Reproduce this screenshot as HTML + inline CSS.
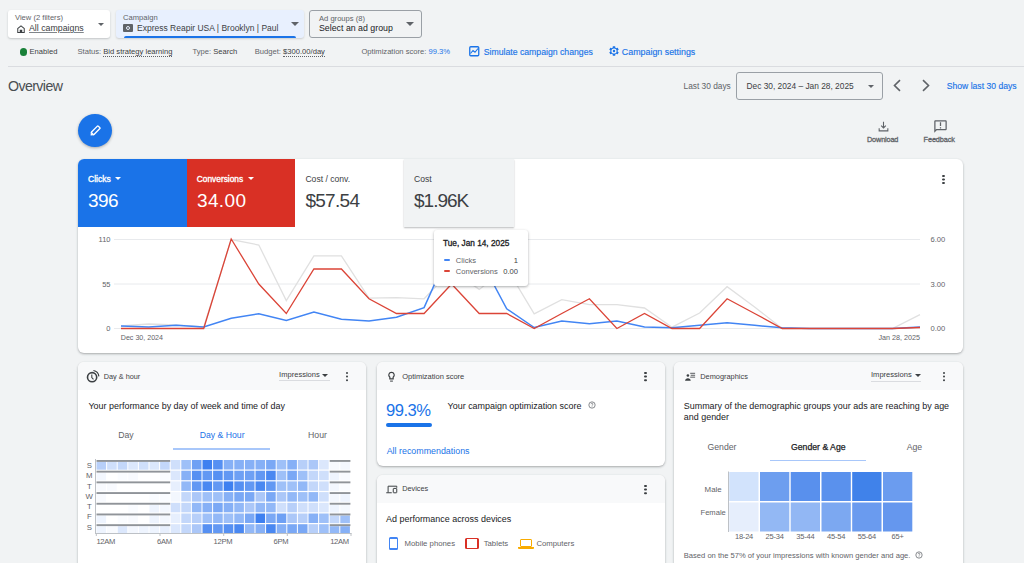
<!DOCTYPE html>
<html><head><meta charset="utf-8">
<style>
*{box-sizing:border-box;margin:0;padding:0}
html,body{width:1024px;height:563px;overflow:hidden;background:#f1f3f4;font-family:"Liberation Sans",sans-serif;color:#3c4043;position:relative}
.a{position:absolute;white-space:nowrap}
.dd{position:absolute;border-radius:3px}
.lbl{position:absolute;font-size:7.6px;color:#5f6368;white-space:nowrap}
.val{position:absolute;font-size:8.8px;color:#202124;white-space:nowrap}
.tri{position:absolute;width:0;height:0;border-left:4px solid transparent;border-right:4px solid transparent;border-top:4px solid #5f6368}
.st{font-size:7.6px;color:#5f6368;top:47px}
.stv{color:#3c4043}
.dot{border-bottom:1px dotted #5f6368}
.link{color:#1a73e8}
.card{position:absolute;background:#fff;border-radius:6px;box-shadow:0 1px 2px rgba(60,64,67,.3),0 1px 3px rgba(60,64,67,.12);overflow:hidden}
.tl{top:15px}
.tv{top:31.4px;font-size:19px}
.ht{top:9.8px;font-size:7.3px;color:#3c4043}
.imp{top:8.2px;font-size:7.55px;color:#3c4043}
.keb{top:9.6px;width:2.4px;height:2.4px;border-radius:50%;background:#3c4043;box-shadow:0 3.6px 0 #3c4043,0 7.2px 0 #3c4043}
.bt{font-size:8.95px;color:#202124}
.tab{top:67.5px;font-size:8.7px;color:#5f6368}
.dl{top:64px;font-size:7.75px;color:#5f6368}
.chead{position:absolute;left:0;right:0;top:0;height:28px;background:#f8f9fa}
</style></head><body>

<!-- top dropdowns -->
<div class="dd" style="left:8px;top:10px;width:102px;height:28px;background:#fff;box-shadow:0 1px 2px rgba(60,64,67,.25)">
  <div class="lbl" style="left:7px;top:3px">View (2 filters)</div>
  <svg class="a" style="left:7.5px;top:13.5px" width="10" height="10" viewBox="0 0 20 20"><path d="M10 2.5L2.5 8.5V18h15V8.5L10 2.5zM15.5 16h-3v-4.5h-5V16h-3V9.5L10 5l5.5 4.5V16z" fill="#3c4043"/></svg>
  <div class="val" style="left:21px;top:13px;text-decoration:underline;text-decoration-color:#80868b;color:#3c4043">All campaigns</div>
  <div class="tri" style="left:90px;top:12.5px;border-width:3.2px 3.2px 0"></div>
</div>

<div class="dd" style="left:116px;top:10px;width:188px;height:28px;background:#e8f0fe;box-shadow:0 1px 2px rgba(60,64,67,.2)">
  <div class="lbl" style="left:7px;top:3px">Campaign</div>
  <div class="a" style="left:7px;top:14px;width:10px;height:8px;background:#5f6368;border-radius:1px"></div>
  <div class="a" style="left:10px;top:15.5px;width:4px;height:4px;border:1px solid #e8f0fe;border-radius:50%"></div>
  <div class="val" style="left:21px;top:12.5px;color:#3c4043;font-size:8.5px">Express Reapir USA | Brooklyn | Paul</div>
  <div class="tri" style="left:175px;top:12px"></div>
  <div class="a" style="left:8px;top:25.5px;width:172px;height:2.5px;background:#1a73e8;border-radius:2px 2px 0 0"></div>
</div>

<div class="dd" style="left:309px;top:10px;width:113px;height:28px;border:1px solid #9aa0a6">
  <div class="lbl" style="left:9px;top:3px">Ad groups (8)</div>
  <div class="val" style="left:9px;top:12px;color:#202124">Select an ad group</div>
  <div class="tri" style="left:96px;top:11px"></div>
</div>

<!-- status row -->
<div class="a" style="left:19.6px;top:48.4px;width:7.4px;height:7.4px;border-radius:50%;background:#188038"></div>
<div class="a st" style="left:29.5px;color:#3c4043">Enabled</div>
<div class="a st" style="left:77.5px">Status: <span class="stv dot">Bid strategy learning</span></div>
<div class="a st" style="left:192.5px">Type: <span class="stv">Search</span></div>
<div class="a st" style="left:254.8px">Budget: <span class="stv dot">$300.00/day</span></div>
<div class="a st" style="left:361.4px">Optimization score: <span class="link">99.3%</span></div>
<svg class="a" style="left:469px;top:46px" width="10.5" height="10.5" viewBox="0 0 21 21"><rect x="1.5" y="1.5" width="18" height="18" rx="2" fill="none" stroke="#1a73e8" stroke-width="2.6"/><polyline points="3,15 8,9 12,12.5 18,5" fill="none" stroke="#1a73e8" stroke-width="2.2"/></svg>
<div class="a link" style="left:483.7px;top:46.8px;font-size:8.7px;-webkit-text-stroke:.15px #1a73e8">Simulate campaign changes</div>
<svg class="a" style="left:607.6px;top:45.4px" width="12" height="12" viewBox="0 0 24 24"><path d="M19.14 12.94c.04-.3.06-.61.06-.94 0-.32-.02-.64-.07-.94l2.03-1.58a.49.49 0 00.12-.61l-1.92-3.32a.488.488 0 00-.59-.22l-2.39.96c-.5-.38-1.03-.7-1.62-.94l-.36-2.54a.484.484 0 00-.48-.41h-3.84c-.24 0-.43.17-.47.41l-.36 2.54c-.59.24-1.13.57-1.62.94l-2.39-.96c-.22-.08-.47 0-.59.22L2.74 8.87c-.12.21-.08.47.12.61l2.03 1.58c-.05.3-.09.63-.09.94s.02.64.07.94l-2.03 1.58a.49.49 0 00-.12.61l1.92 3.32c.12.22.37.29.59.22l2.39-.96c.5.38 1.03.7 1.62.94l.36 2.54c.05.24.24.41.48.41h3.84c.24 0 .44-.17.47-.41l.36-2.54c.59-.24 1.13-.56 1.62-.94l2.39.96c.22.08.47 0 .59-.22l1.92-3.32c.12-.22.07-.47-.12-.61l-2.01-1.58z" fill="#1a73e8"/><circle cx="12" cy="12" r="5.2" fill="#f1f3f4"/><circle cx="12" cy="12" r="2.4" fill="#1a73e8"/></svg>
<div class="a link" style="left:621.8px;top:46.8px;font-size:8.9px;-webkit-text-stroke:.15px #1a73e8">Campaign settings</div>

<div class="a" style="left:8px;top:66px;width:1016px;height:1px;background:#dadce0"></div>

<!-- overview row -->
<div class="a" style="left:8px;top:77.8px;font-size:14.2px;letter-spacing:-.6px;color:#4a4e52">Overview</div>
<div class="a" style="left:683.5px;top:81px;font-size:8.34px;color:#5f6368">Last 30 days</div>
<div class="dd" style="left:735.5px;top:71.5px;width:147px;height:28px;border:1px solid #9aa0a6;border-radius:3px">
  <div class="a" style="left:10px;top:8px;font-size:8.36px;color:#3c4043">Dec 30, 2024 – Jan 28, 2025</div>
  <div class="tri" style="left:131px;top:12px;border-width:3.5px 3.5px 0"></div>
</div>
<svg class="a" style="left:892px;top:79px" width="10" height="13" viewBox="0 0 10 13"><polyline points="8,1.2 2.5,6.5 8,11.8" fill="none" stroke="#5f6368" stroke-width="1.6"/></svg>
<svg class="a" style="left:921px;top:79px" width="10" height="13" viewBox="0 0 10 13"><polyline points="2,1.2 7.5,6.5 2,11.8" fill="none" stroke="#5f6368" stroke-width="1.6"/></svg>
<div class="a link" style="left:946.8px;top:81px;font-size:8.6px;-webkit-text-stroke:.15px #1a73e8">Show last 30 days</div>

<!-- FAB -->
<div class="a" style="left:78px;top:114px;width:33.5px;height:33px;border-radius:50%;background:#1a73e8;box-shadow:0 1px 3px rgba(0,0,0,.3)"></div>
<svg class="a" style="left:88px;top:123.5px" width="14" height="14" viewBox="0 0 28 28"><g transform="rotate(45 14 14)"><rect x="10.5" y="2.5" width="7" height="19" rx="1.2" fill="none" stroke="#fff" stroke-width="2.8"/><path d="M10 22 L14 26.5 L18 22z" fill="#fff"/></g></svg>

<!-- download / feedback -->
<svg class="a" style="left:877px;top:119.5px" width="13" height="13" viewBox="0 0 24 24"><path d="M19 15v4H5v-4H3v6h18v-6zM17 11l-1.41-1.41L13 12.17V3h-2v9.17L8.41 9.59 7 11l5 5z" fill="#5f6368"/></svg>
<div class="a" style="left:867px;top:134.5px;font-size:7.3px;color:#5f6368;-webkit-text-stroke:.3px #5f6368;letter-spacing:-.15px">Download</div>
<svg class="a" style="left:932.5px;top:118.5px" width="15" height="15" viewBox="0 0 24 24"><path d="M20 2H4c-1.1 0-2 .9-2 2v18l4-4h14c1.1 0 2-.9 2-2V4c0-1.1-.9-2-2-2zm0 14H5.17L4 17.17V4h16v12zM11 5h2v6h-2zm0 8h2v2h-2z" fill="#5f6368"/></svg>
<div class="a" style="left:923.6px;top:134.5px;font-size:7.3px;color:#5f6368;-webkit-text-stroke:.3px #5f6368;letter-spacing:-.1px">Feedback</div>

<!-- MAIN CARD -->
<div class="card" id="main" style="left:78px;top:159px;width:885px;height:194px">
  <div class="a" style="left:0;top:0;width:109.3px;height:68px;background:#1a73e8"></div>
  <div class="a" style="left:109.3px;top:0;width:108.2px;height:68px;background:#d93025"></div>
  <div class="a" style="left:326.4px;top:0;width:109.6px;height:67.8px;background:#f1f3f4;box-shadow:0 1px 1.5px rgba(60,64,67,.35)"></div>
  <div class="a tl" style="left:10px;color:#fff;font-size:8.5px;-webkit-text-stroke:.35px #fff">Clicks</div>
  <div class="tri" style="left:36.9px;top:18px;border-width:3px 3px 0;border-top-color:#fff"></div>
  <div class="a tv" style="left:10px;color:#fff;letter-spacing:-.6px">396</div>
  <div class="a tl" style="left:118.8px;color:#fff;font-size:8.36px;-webkit-text-stroke:.35px #fff">Conversions</div>
  <div class="tri" style="left:170px;top:18px;border-width:3px 3px 0;border-top-color:#fff"></div>
  <div class="a tv" style="left:119px;color:#fff;letter-spacing:.35px">34.00</div>
  <div class="a tl" style="left:227.4px;color:#3c4043;font-size:8.6px">Cost / conv.</div>
  <div class="a tv" style="left:227.4px;color:#3c4043;letter-spacing:-.7px">$57.54</div>
  <div class="a tl" style="left:336px;color:#3c4043;font-size:8.6px">Cost</div>
  <div class="a tv" style="left:336px;color:#3c4043;letter-spacing:-1px">$1.96K</div>
  <div class="a" style="left:864.4px;top:15.9px;width:2.8px;height:2.4px;border-radius:50%;background:#3c4043;box-shadow:0 3.5px 0 #3c4043,0 7px 0 #3c4043"></div>
</div>
<svg class="a" style="left:0;top:0" width="1024" height="563">
  <g stroke="#e8eaed" stroke-width="1">
    <line x1="114" y1="239.5" x2="920" y2="239.5"/>
    <line x1="114" y1="284" x2="920" y2="284"/>
    <line x1="114" y1="328.5" x2="920" y2="328.5"/>
  </g>
  <g fill="none" stroke-linejoin="miter" stroke-linecap="butt">
  <polyline stroke="#e0e0e0" stroke-width="1.3" points="121.0,326.0 148.6,324.0 176.1,325.0 203.7,327.0 231.2,239.5 258.8,245.0 286.3,300.6 313.9,255.8 341.4,255.8 369.0,298.2 396.5,297.7 424.1,298.8 451.6,270.0 479.2,289.4 506.7,268.0 534.2,313.9 561.8,299.7 589.4,304.7 616.9,304.7 644.5,308.0 672.0,327.2 699.6,313.0 727.1,286.7 754.6,307.0 782.2,328.5 809.8,328.5 837.3,328.5 864.9,328.5 892.4,328.5 920.0,314.6"/>
  <polyline stroke="#4285f4" stroke-width="1.5" points="121.0,326.1 148.6,327.0 176.1,325.2 203.7,327.0 231.2,318.2 258.8,313.8 286.3,320.5 313.9,312.0 341.4,319.3 369.0,321.1 396.5,317.3 424.1,307.6 451.6,246.0 479.2,257.0 506.7,308.8 534.2,327.5 561.8,321.1 589.4,323.7 616.9,321.1 644.5,327.0 672.0,327.8 699.6,325.3 727.1,322.8 754.6,325.3 782.2,327.8 809.8,328.5 837.3,328.5 864.9,328.5 892.4,328.5 920.0,327.0"/>
  <polyline stroke="#db4437" stroke-width="1.3" points="121.0,328.5 148.6,328.5 176.1,328.5 203.7,328.5 231.2,239.0 258.8,284.0 286.3,313.5 313.9,269.0 341.4,269.0 369.0,298.8 396.5,313.5 424.1,313.5 451.6,284.0 479.2,313.5 506.7,313.5 534.2,328.5 561.8,313.5 589.4,298.8 616.9,328.5 644.5,313.5 672.0,328.5 699.6,328.5 727.1,298.8 754.6,313.5 782.2,328.5 809.8,328.5 837.3,328.5 864.9,328.5 892.4,328.5 920.0,327.5"/>
  </g>
  <g font-family="Liberation Sans" font-size="7.5" fill="#5f6368" text-anchor="end">
    <text x="110.5" y="242">110</text>
    <text x="110.5" y="286.5">55</text>
    <text x="110.5" y="331">0</text>
  </g>
  <g font-family="Liberation Sans" font-size="7.6" fill="#5f6368">
    <text x="930.5" y="242">6.00</text>
    <text x="930.5" y="286.5">3.00</text>
    <text x="930.5" y="331">0.00</text>
    <text x="120.8" y="340.3" font-size="7.1">Dec 30, 2024</text>
    <text x="920" y="340.3" font-size="7.2" text-anchor="end">Jan 28, 2025</text>
  </g>
</svg>
<div class="a" style="left:434px;top:230px;width:94px;height:56px;background:#fff;border-radius:3px;box-shadow:0 1px 3px rgba(60,64,67,.3),0 1px 2px rgba(60,64,67,.15)">
  <div class="a" style="left:9px;top:9px;font-size:8.27px;color:#202124;-webkit-text-stroke:.3px #202124">Tue, Jan 14, 2025</div>
  <div class="a" style="left:9.5px;top:28.8px;width:6.5px;height:2px;background:#4285f4;border-radius:1px"></div>
  <div class="a" style="left:21.8px;top:25.5px;font-size:7.6px;color:#5f6368">Clicks</div>
  <div class="a" style="right:10px;top:25.5px;font-size:7.6px;color:#3c4043">1</div>
  <div class="a" style="left:9.5px;top:39.5px;width:6.5px;height:2px;background:#db4437;border-radius:1px"></div>
  <div class="a" style="left:21.8px;top:36.7px;font-size:7.55px;color:#5f6368">Conversions</div>
  <div class="a" style="right:10px;top:36.7px;font-size:7.6px;color:#3c4043">0.00</div>
</div>

<!-- bottom cards -->
<div class="card" style="left:77.8px;top:362px;width:288.3px;height:220px">
  <div class="chead"></div>
  <svg class="a" style="left:5px;top:5px" width="20" height="20" viewBox="0 0 20 20"><circle cx="9.1" cy="10.2" r="4.6" fill="none" stroke="#3c4043" stroke-width="1.6"/><path d="M8.8 7.6v2.9l1.7 1.9" fill="none" stroke="#3c4043" stroke-width="1.1"/><path d="M10.4 3.5A6.8 6.8 0 0 1 15.9 9.4" fill="none" stroke="#3c4043" stroke-width="1.2"/></svg>
  <div class="a ht" style="left:26px">Day &amp; hour</div>
  <div class="a imp" style="left:201.3px">Impressions</div>
  <div class="tri" style="left:244.5px;top:12px;border-width:3px 3px 0;border-top-color:#3c4043"></div>
  <div class="a" style="left:201.3px;top:18.3px;width:51px;height:1px;background:#dadce0"></div>
  <div class="a keb" style="left:267.8px"></div>
  <div class="a bt" style="left:10.7px;top:38.5px">Your performance by day of week and time of day</div>
  <div class="a tab" style="left:40.4px">Day</div>
  <div class="a tab" style="left:121.9px;color:#1a73e8">Day &amp; Hour</div>
  <div class="a tab" style="left:230.3px">Hour</div>
  <div class="a" style="left:95.5px;top:86.2px;width:96.7px;height:1.5px;background:#a8c7fa"></div>
</div>

<div class="card" style="left:376.5px;top:362px;width:288px;height:104px">
  <div class="chead"></div>
  <svg class="a" style="left:10px;top:8.5px" width="10" height="12" viewBox="0 0 20 24"><path d="M9 2.6a5.4 5.4 0 0 0-3.3 9.7V15.6h6.6V12.3A5.4 5.4 0 0 0 9 2.6z" fill="none" stroke="#3c4043" stroke-width="2.4"/><path d="M6.2 20.2h5.6" stroke="#3c4043" stroke-width="2"/></svg>
  <div class="a ht" style="left:25.7px;font-size:7.5px">Optimization score</div>
  <div class="a keb" style="left:267.8px"></div>
  <div class="a" style="left:9.6px;top:39px;font-size:16.6px;color:#1a73e8;letter-spacing:-.55px">99.3%</div>
  <div class="a" style="left:9.5px;top:61px;width:46px;height:3.8px;background:#1a73e8;border-radius:2px"></div>
  <div class="a bt" style="left:71.1px;top:38.5px">Your campaign optimization score</div>
  <svg class="a" style="left:211.3px;top:38.5px" width="8" height="8" viewBox="0 0 24 24"><circle cx="12" cy="12" r="9.5" fill="none" stroke="#5f6368" stroke-width="2.2"/><path d="M9.2 9.5a2.8 2.8 0 1 1 4 2.5c-.9.5-1.2 1-1.2 2" fill="none" stroke="#5f6368" stroke-width="2"/><circle cx="12" cy="17.3" r="1.2" fill="#5f6368"/></svg>
  <div class="a" style="left:10.2px;top:83.5px;font-size:8.88px;color:#1a73e8">All recommendations</div>
</div>

<div class="card" style="left:376.5px;top:475.3px;width:288px;height:120px">
  <div class="chead"></div>
  <svg class="a" style="left:9.5px;top:9.3px" width="12" height="9" viewBox="0 0 24 18"><path d="M4.2 15V2.4H21.5V5.5" fill="none" stroke="#3c4043" stroke-width="2"/><path d="M0.5 15.6h11" stroke="#3c4043" stroke-width="2.2"/><rect x="14.5" y="6.8" width="7" height="8.8" rx="1" fill="none" stroke="#3c4043" stroke-width="2"/></svg>
  <div class="a ht" style="left:25.7px;top:9.1px">Devices</div>
  <div class="a keb" style="left:267.8px"></div>
  <div class="a bt" style="left:9.6px;top:38.8px">Ad performance across devices</div>
  <div class="a" style="left:12px;top:61.5px;width:9.6px;height:13.5px;border:solid #4285f4;border-width:2.2px 1.8px;border-radius:1.5px"></div>
  <div class="a dl" style="left:28.1px">Mobile phones</div>
  <div class="a" style="left:88px;top:63px;width:14px;height:10.3px;border:solid #d93025;border-width:1.8px 2px;border-radius:1.5px"></div>
  <div class="a dl" style="left:107.2px">Tablets</div>
  <div class="a" style="left:143.3px;top:63.5px;width:12px;height:8.5px;border:1.8px solid #f9ab00;border-radius:1px"></div>
  <div class="a" style="left:141.5px;top:71.5px;width:15.6px;height:1.8px;background:#f9ab00;border-radius:0 0 1px 1px"></div>
  <div class="a dl" style="left:159.9px">Computers</div>
</div>

<div class="card" style="left:674px;top:362px;width:289px;height:220px">
  <div class="chead"></div>
  <svg class="a" style="left:9.5px;top:10px" width="12" height="10" viewBox="0 0 24 20"><circle cx="7.8" cy="7" r="2.6" fill="#3c4043"/><path d="M2.2 17.5c0-3 2.5-4.8 5.6-4.8s5.6 1.8 5.6 4.8z" fill="#3c4043"/><path d="M12.4 2.6h9.8M13.5 6.5h8.7M12.4 10.3h9.8" stroke="#3c4043" stroke-width="1.7"/></svg>
  <div class="a ht" style="left:26.2px;font-size:7.4px">Demographics</div>
  <div class="a imp" style="left:197px">Impressions</div>
  <div class="tri" style="left:240.5px;top:12px;border-width:3px 3px 0;border-top-color:#3c4043"></div>
  <div class="a" style="left:197px;top:18.5px;width:50px;height:1px;background:#dadce0"></div>
  <div class="a keb" style="left:268.6px"></div>
  <div class="a bt" style="left:9.8px;top:38.5px;line-height:11.1px">Summary of the demographic groups your ads are reaching by age<br>and gender</div>
  <div class="a tab" style="left:33.5px;top:80px">Gender</div>
  <div class="a tab" style="left:117px;top:80px;color:#202124;-webkit-text-stroke:.25px #202124">Gender &amp; Age</div>
  <div class="a tab" style="left:232.7px;top:80px">Age</div>
  <div class="a" style="left:96.2px;top:97.8px;width:95.5px;height:1.5px;background:#a8c7fa"></div>
  <div class="a" style="left:30.6px;top:123.3px;font-size:7.9px;color:#5f6368">Male</div>
  <div class="a" style="left:26.5px;top:146.2px;font-size:7.6px;color:#5f6368">Female</div>
  <div class="a" style="left:9.8px;top:188.5px;font-size:7.59px;color:#5f6368">Based on the 57% of your impressions with known gender and age.</div>
  <svg class="a" style="left:240.6px;top:188.8px" width="8" height="8" viewBox="0 0 24 24"><circle cx="12" cy="12" r="9.5" fill="none" stroke="#5f6368" stroke-width="2.2"/><path d="M9.2 9.5a2.8 2.8 0 1 1 4 2.5c-.9.5-1.2 1-1.2 2" fill="none" stroke="#5f6368" stroke-width="2"/><circle cx="12" cy="17.3" r="1.2" fill="#5f6368"/></svg>
</div>

<svg class="a" style="left:0;top:0" width="1024" height="563">
<rect x="96.5" y="462.0" width="9.6" height="7.7" fill="#b7cff9"/>
<rect x="107.1" y="462.0" width="9.6" height="7.7" fill="#cfdffb"/>
<rect x="117.7" y="462.0" width="9.6" height="7.7" fill="#c3d7fa"/>
<rect x="128.3" y="462.0" width="9.6" height="7.7" fill="#dbe7fc"/>
<rect x="138.9" y="462.0" width="9.6" height="7.7" fill="#cfdffb"/>
<rect x="149.5" y="462.0" width="9.6" height="7.7" fill="#dbe7fc"/>
<rect x="160.1" y="462.0" width="9.6" height="7.7" fill="#c3d7fa"/>
<rect x="170.7" y="460.0" width="9.6" height="9.5" fill="#cfdffb"/>
<rect x="181.3" y="460.0" width="9.6" height="9.5" fill="#9ec0f8"/>
<rect x="191.9" y="460.0" width="9.6" height="9.5" fill="#6ea0f4"/>
<rect x="202.5" y="460.0" width="9.6" height="9.5" fill="#3e80f0"/>
<rect x="213.1" y="460.0" width="9.6" height="9.5" fill="#5690f2"/>
<rect x="223.7" y="460.0" width="9.6" height="9.5" fill="#86b0f6"/>
<rect x="234.3" y="460.0" width="9.6" height="9.5" fill="#86b0f6"/>
<rect x="244.9" y="460.0" width="9.6" height="9.5" fill="#86b0f6"/>
<rect x="255.5" y="460.0" width="9.6" height="9.5" fill="#86b0f6"/>
<rect x="266.1" y="460.0" width="9.6" height="9.5" fill="#7aa8f5"/>
<rect x="276.7" y="460.0" width="9.6" height="9.5" fill="#9ec0f8"/>
<rect x="287.3" y="460.0" width="9.6" height="9.5" fill="#86b0f6"/>
<rect x="297.9" y="460.0" width="9.6" height="9.5" fill="#b7cff9"/>
<rect x="308.5" y="460.0" width="9.6" height="9.5" fill="#abc7f8"/>
<rect x="319.1" y="460.0" width="9.6" height="9.5" fill="#dbe7fc"/>
<rect x="329.7" y="462.0" width="9.6" height="7.7" fill="#f8fafe"/>
<rect x="340.3" y="462.0" width="9.6" height="7.7" fill="#f3f7fe"/>
<rect x="96.5" y="460.0" width="73.7" height="1.9" fill="#909499"/>
<rect x="329.7" y="460.0" width="20.7" height="1.9" fill="#909499"/>
<rect x="96.5" y="472.7" width="9.6" height="7.7" fill="#f3f7fe"/>
<rect x="107.1" y="472.7" width="9.6" height="7.7" fill="#ffffff"/>
<rect x="117.7" y="472.7" width="9.6" height="7.7" fill="#fafcff"/>
<rect x="128.3" y="472.7" width="9.6" height="7.7" fill="#f8fafe"/>
<rect x="138.9" y="472.7" width="9.6" height="7.7" fill="#ffffff"/>
<rect x="149.5" y="472.7" width="9.6" height="7.7" fill="#ffffff"/>
<rect x="160.1" y="472.7" width="9.6" height="7.7" fill="#fafcff"/>
<rect x="170.7" y="470.7" width="9.6" height="9.5" fill="#dbe7fc"/>
<rect x="181.3" y="470.7" width="9.6" height="9.5" fill="#86b0f6"/>
<rect x="191.9" y="470.7" width="9.6" height="9.5" fill="#5690f2"/>
<rect x="202.5" y="470.7" width="9.6" height="9.5" fill="#6298f3"/>
<rect x="213.1" y="470.7" width="9.6" height="9.5" fill="#5690f2"/>
<rect x="223.7" y="470.7" width="9.6" height="9.5" fill="#6298f3"/>
<rect x="234.3" y="470.7" width="9.6" height="9.5" fill="#6ea0f4"/>
<rect x="244.9" y="470.7" width="9.6" height="9.5" fill="#6ea0f4"/>
<rect x="255.5" y="470.7" width="9.6" height="9.5" fill="#6298f3"/>
<rect x="266.1" y="470.7" width="9.6" height="9.5" fill="#4a88f1"/>
<rect x="276.7" y="470.7" width="9.6" height="9.5" fill="#9ec0f8"/>
<rect x="287.3" y="470.7" width="9.6" height="9.5" fill="#7aa8f5"/>
<rect x="297.9" y="470.7" width="9.6" height="9.5" fill="#9ec0f8"/>
<rect x="308.5" y="470.7" width="9.6" height="9.5" fill="#c3d7fa"/>
<rect x="319.1" y="470.7" width="9.6" height="9.5" fill="#cfdffb"/>
<rect x="329.7" y="472.7" width="9.6" height="7.7" fill="#eef4fe"/>
<rect x="340.3" y="472.7" width="9.6" height="7.7" fill="#f8fafe"/>
<rect x="96.5" y="470.7" width="73.7" height="1.9" fill="#909499"/>
<rect x="329.7" y="470.7" width="20.7" height="1.9" fill="#909499"/>
<rect x="96.5" y="483.4" width="9.6" height="7.7" fill="#f8fafe"/>
<rect x="107.1" y="483.4" width="9.6" height="7.7" fill="#f8fafe"/>
<rect x="117.7" y="483.4" width="9.6" height="7.7" fill="#ffffff"/>
<rect x="128.3" y="483.4" width="9.6" height="7.7" fill="#ffffff"/>
<rect x="138.9" y="483.4" width="9.6" height="7.7" fill="#ffffff"/>
<rect x="149.5" y="483.4" width="9.6" height="7.7" fill="#ffffff"/>
<rect x="160.1" y="483.4" width="9.6" height="7.7" fill="#ffffff"/>
<rect x="170.7" y="481.4" width="9.6" height="9.5" fill="#e7effd"/>
<rect x="181.3" y="481.4" width="9.6" height="9.5" fill="#92b8f7"/>
<rect x="191.9" y="481.4" width="9.6" height="9.5" fill="#6298f3"/>
<rect x="202.5" y="481.4" width="9.6" height="9.5" fill="#4a88f1"/>
<rect x="213.1" y="481.4" width="9.6" height="9.5" fill="#6298f3"/>
<rect x="223.7" y="481.4" width="9.6" height="9.5" fill="#3e80f0"/>
<rect x="234.3" y="481.4" width="9.6" height="9.5" fill="#5690f2"/>
<rect x="244.9" y="481.4" width="9.6" height="9.5" fill="#6298f3"/>
<rect x="255.5" y="481.4" width="9.6" height="9.5" fill="#4a88f1"/>
<rect x="266.1" y="481.4" width="9.6" height="9.5" fill="#6298f3"/>
<rect x="276.7" y="481.4" width="9.6" height="9.5" fill="#9ec0f8"/>
<rect x="287.3" y="481.4" width="9.6" height="9.5" fill="#9ec0f8"/>
<rect x="297.9" y="481.4" width="9.6" height="9.5" fill="#92b8f7"/>
<rect x="308.5" y="481.4" width="9.6" height="9.5" fill="#c3d7fa"/>
<rect x="319.1" y="481.4" width="9.6" height="9.5" fill="#cfdffb"/>
<rect x="329.7" y="483.4" width="9.6" height="7.7" fill="#f3f7fe"/>
<rect x="340.3" y="483.4" width="9.6" height="7.7" fill="#fafcff"/>
<rect x="96.5" y="481.4" width="73.7" height="1.9" fill="#909499"/>
<rect x="329.7" y="481.4" width="20.7" height="1.9" fill="#909499"/>
<rect x="96.5" y="494.1" width="9.6" height="7.7" fill="#f8fafe"/>
<rect x="107.1" y="494.1" width="9.6" height="7.7" fill="#ffffff"/>
<rect x="117.7" y="494.1" width="9.6" height="7.7" fill="#ffffff"/>
<rect x="128.3" y="494.1" width="9.6" height="7.7" fill="#ffffff"/>
<rect x="138.9" y="494.1" width="9.6" height="7.7" fill="#ffffff"/>
<rect x="149.5" y="494.1" width="9.6" height="7.7" fill="#fafcff"/>
<rect x="160.1" y="494.1" width="9.6" height="7.7" fill="#fafcff"/>
<rect x="170.7" y="492.1" width="9.6" height="9.5" fill="#f3f7fe"/>
<rect x="181.3" y="492.1" width="9.6" height="9.5" fill="#c3d7fa"/>
<rect x="191.9" y="492.1" width="9.6" height="9.5" fill="#abc7f8"/>
<rect x="202.5" y="492.1" width="9.6" height="9.5" fill="#9ec0f8"/>
<rect x="213.1" y="492.1" width="9.6" height="9.5" fill="#9ec0f8"/>
<rect x="223.7" y="492.1" width="9.6" height="9.5" fill="#86b0f6"/>
<rect x="234.3" y="492.1" width="9.6" height="9.5" fill="#7aa8f5"/>
<rect x="244.9" y="492.1" width="9.6" height="9.5" fill="#7aa8f5"/>
<rect x="255.5" y="492.1" width="9.6" height="9.5" fill="#abc7f8"/>
<rect x="266.1" y="492.1" width="9.6" height="9.5" fill="#7aa8f5"/>
<rect x="276.7" y="492.1" width="9.6" height="9.5" fill="#abc7f8"/>
<rect x="287.3" y="492.1" width="9.6" height="9.5" fill="#92b8f7"/>
<rect x="297.9" y="492.1" width="9.6" height="9.5" fill="#9ec0f8"/>
<rect x="308.5" y="492.1" width="9.6" height="9.5" fill="#92b8f7"/>
<rect x="319.1" y="492.1" width="9.6" height="9.5" fill="#cfdffb"/>
<rect x="329.7" y="494.1" width="9.6" height="7.7" fill="#f3f7fe"/>
<rect x="340.3" y="494.1" width="9.6" height="7.7" fill="#eef4fe"/>
<rect x="96.5" y="492.1" width="73.7" height="1.9" fill="#909499"/>
<rect x="329.7" y="492.1" width="20.7" height="1.9" fill="#909499"/>
<rect x="96.5" y="504.8" width="9.6" height="7.7" fill="#ffffff"/>
<rect x="107.1" y="504.8" width="9.6" height="7.7" fill="#ffffff"/>
<rect x="117.7" y="504.8" width="9.6" height="7.7" fill="#ffffff"/>
<rect x="128.3" y="504.8" width="9.6" height="7.7" fill="#fafcff"/>
<rect x="138.9" y="504.8" width="9.6" height="7.7" fill="#ffffff"/>
<rect x="149.5" y="504.8" width="9.6" height="7.7" fill="#eef4fe"/>
<rect x="160.1" y="504.8" width="9.6" height="7.7" fill="#f3f7fe"/>
<rect x="170.7" y="502.8" width="9.6" height="9.5" fill="#cfdffb"/>
<rect x="181.3" y="502.8" width="9.6" height="9.5" fill="#c3d7fa"/>
<rect x="191.9" y="502.8" width="9.6" height="9.5" fill="#92b8f7"/>
<rect x="202.5" y="502.8" width="9.6" height="9.5" fill="#86b0f6"/>
<rect x="213.1" y="502.8" width="9.6" height="9.5" fill="#7aa8f5"/>
<rect x="223.7" y="502.8" width="9.6" height="9.5" fill="#86b0f6"/>
<rect x="234.3" y="502.8" width="9.6" height="9.5" fill="#92b8f7"/>
<rect x="244.9" y="502.8" width="9.6" height="9.5" fill="#abc7f8"/>
<rect x="255.5" y="502.8" width="9.6" height="9.5" fill="#92b8f7"/>
<rect x="266.1" y="502.8" width="9.6" height="9.5" fill="#92b8f7"/>
<rect x="276.7" y="502.8" width="9.6" height="9.5" fill="#cfdffb"/>
<rect x="287.3" y="502.8" width="9.6" height="9.5" fill="#b7cff9"/>
<rect x="297.9" y="502.8" width="9.6" height="9.5" fill="#cfdffb"/>
<rect x="308.5" y="502.8" width="9.6" height="9.5" fill="#cfdffb"/>
<rect x="319.1" y="502.8" width="9.6" height="9.5" fill="#dbe7fc"/>
<rect x="329.7" y="504.8" width="9.6" height="7.7" fill="#eef4fe"/>
<rect x="340.3" y="504.8" width="9.6" height="7.7" fill="#f5f9fe"/>
<rect x="96.5" y="502.8" width="73.7" height="1.9" fill="#909499"/>
<rect x="329.7" y="502.8" width="20.7" height="1.9" fill="#909499"/>
<rect x="96.5" y="515.5" width="9.6" height="7.7" fill="#eef4fe"/>
<rect x="107.1" y="515.5" width="9.6" height="7.7" fill="#ffffff"/>
<rect x="117.7" y="515.5" width="9.6" height="7.7" fill="#fafcff"/>
<rect x="128.3" y="515.5" width="9.6" height="7.7" fill="#f8fafe"/>
<rect x="138.9" y="515.5" width="9.6" height="7.7" fill="#ffffff"/>
<rect x="149.5" y="515.5" width="9.6" height="7.7" fill="#eef4fe"/>
<rect x="160.1" y="515.5" width="9.6" height="7.7" fill="#f3f7fe"/>
<rect x="170.7" y="513.5" width="9.6" height="9.5" fill="#e7effd"/>
<rect x="181.3" y="513.5" width="9.6" height="9.5" fill="#c3d7fa"/>
<rect x="191.9" y="513.5" width="9.6" height="9.5" fill="#b7cff9"/>
<rect x="202.5" y="513.5" width="9.6" height="9.5" fill="#9ec0f8"/>
<rect x="213.1" y="513.5" width="9.6" height="9.5" fill="#92b8f7"/>
<rect x="223.7" y="513.5" width="9.6" height="9.5" fill="#9ec0f8"/>
<rect x="234.3" y="513.5" width="9.6" height="9.5" fill="#92b8f7"/>
<rect x="244.9" y="513.5" width="9.6" height="9.5" fill="#7aa8f5"/>
<rect x="255.5" y="513.5" width="9.6" height="9.5" fill="#3e80f0"/>
<rect x="266.1" y="513.5" width="9.6" height="9.5" fill="#7aa8f5"/>
<rect x="276.7" y="513.5" width="9.6" height="9.5" fill="#6ea0f4"/>
<rect x="287.3" y="513.5" width="9.6" height="9.5" fill="#abc7f8"/>
<rect x="297.9" y="513.5" width="9.6" height="9.5" fill="#b7cff9"/>
<rect x="308.5" y="513.5" width="9.6" height="9.5" fill="#86b0f6"/>
<rect x="319.1" y="513.5" width="9.6" height="9.5" fill="#9ec0f8"/>
<rect x="329.7" y="515.5" width="9.6" height="7.7" fill="#c3d7fa"/>
<rect x="340.3" y="515.5" width="9.6" height="7.7" fill="#9ec0f8"/>
<rect x="96.5" y="513.5" width="73.7" height="1.9" fill="#909499"/>
<rect x="329.7" y="513.5" width="20.7" height="1.9" fill="#909499"/>
<rect x="96.5" y="526.2" width="9.6" height="7.7" fill="#eef4fe"/>
<rect x="107.1" y="526.2" width="9.6" height="7.7" fill="#f8fafe"/>
<rect x="117.7" y="526.2" width="9.6" height="7.7" fill="#dbe7fc"/>
<rect x="128.3" y="526.2" width="9.6" height="7.7" fill="#f3f7fe"/>
<rect x="138.9" y="526.2" width="9.6" height="7.7" fill="#eef4fe"/>
<rect x="149.5" y="526.2" width="9.6" height="7.7" fill="#eef4fe"/>
<rect x="160.1" y="526.2" width="9.6" height="7.7" fill="#e7effd"/>
<rect x="170.7" y="524.2" width="9.6" height="9.5" fill="#dbe7fc"/>
<rect x="181.3" y="524.2" width="9.6" height="9.5" fill="#c3d7fa"/>
<rect x="191.9" y="524.2" width="9.6" height="9.5" fill="#abc7f8"/>
<rect x="202.5" y="524.2" width="9.6" height="9.5" fill="#5690f2"/>
<rect x="213.1" y="524.2" width="9.6" height="9.5" fill="#6298f3"/>
<rect x="223.7" y="524.2" width="9.6" height="9.5" fill="#5690f2"/>
<rect x="234.3" y="524.2" width="9.6" height="9.5" fill="#4a88f1"/>
<rect x="244.9" y="524.2" width="9.6" height="9.5" fill="#92b8f7"/>
<rect x="255.5" y="524.2" width="9.6" height="9.5" fill="#86b0f6"/>
<rect x="266.1" y="524.2" width="9.6" height="9.5" fill="#4a88f1"/>
<rect x="276.7" y="524.2" width="9.6" height="9.5" fill="#86b0f6"/>
<rect x="287.3" y="524.2" width="9.6" height="9.5" fill="#7aa8f5"/>
<rect x="297.9" y="524.2" width="9.6" height="9.5" fill="#7aa8f5"/>
<rect x="308.5" y="524.2" width="9.6" height="9.5" fill="#b7cff9"/>
<rect x="319.1" y="524.2" width="9.6" height="9.5" fill="#9ec0f8"/>
<rect x="329.7" y="526.2" width="9.6" height="7.7" fill="#92b8f7"/>
<rect x="340.3" y="526.2" width="9.6" height="7.7" fill="#86b0f6"/>
<rect x="96.5" y="524.2" width="73.7" height="1.9" fill="#909499"/>
<rect x="329.7" y="524.2" width="20.7" height="1.9" fill="#909499"/>

  <rect x="95" y="459" width="1" height="75" fill="#bdc1c6"/>
  <rect x="95" y="533" width="256.5" height="1" fill="#bdc1c6"/>
  <rect x="95.8" y="533" width="1" height="3" fill="#bdc1c6"/>
  <rect x="159.5" y="533" width="1" height="3" fill="#bdc1c6"/>
  <rect x="223.2" y="533" width="1" height="3" fill="#bdc1c6"/>
  <rect x="286.8" y="533" width="1" height="3" fill="#bdc1c6"/>
  <rect x="350.5" y="533" width="1" height="3" fill="#bdc1c6"/>
  <g font-family="Liberation Sans" font-size="7.8" fill="#5f6368" text-anchor="middle">
    <text x="89.3" y="467.6">S</text><text x="89.3" y="478.2">M</text><text x="89.3" y="488.8">T</text><text x="89.3" y="498.6">W</text><text x="89.3" y="509.1">T</text><text x="89.3" y="519.4">F</text><text x="89.3" y="530">S</text>
  </g>
  <g font-family="Liberation Sans" font-size="7.6" fill="#5f6368" letter-spacing="-.3">
    <text x="96.4" y="544">12AM</text><text x="157" y="544">6AM</text><text x="213.6" y="544">12PM</text><text x="273.6" y="544">6PM</text><text x="330.2" y="544">12AM</text>
  </g>
  <g>
    <rect x="729.2" y="472" width="29.3" height="29" fill="#d2e3fc"/>
    <rect x="760" y="472" width="29.3" height="29" fill="#6d9eef"/>
    <rect x="790.7" y="472" width="29.3" height="29" fill="#5990ed"/>
    <rect x="821.5" y="472" width="29.3" height="29" fill="#5a91ed"/>
    <rect x="852.2" y="472" width="29.3" height="29" fill="#4082ea"/>
    <rect x="883" y="472" width="29.3" height="29" fill="#6b9cef"/>
    <rect x="729.2" y="502.5" width="29.3" height="29" fill="#e6eefc"/>
    <rect x="760" y="502.5" width="29.3" height="29" fill="#93b8f4"/>
    <rect x="790.7" y="502.5" width="29.3" height="29" fill="#92b7f4"/>
    <rect x="821.5" y="502.5" width="29.3" height="29" fill="#7ca8f1"/>
    <rect x="852.2" y="502.5" width="29.3" height="29" fill="#6a9bef"/>
    <rect x="883" y="502.5" width="29.3" height="29" fill="#6597ee"/>
  </g>
  <rect x="728" y="471.5" width="1" height="60.5" fill="#bdc1c6"/>
  <g font-family="Liberation Sans" font-size="7.5" fill="#5f6368" text-anchor="middle" letter-spacing="-.2">
    <text x="744" y="538.5">18-24</text><text x="774.6" y="538.5">25-34</text><text x="805.4" y="538.5">35-44</text><text x="836.1" y="538.5">45-54</text><text x="866.9" y="538.5">55-64</text><text x="897.6" y="538.5">65+</text>
  </g>
</svg>
</body></html>
